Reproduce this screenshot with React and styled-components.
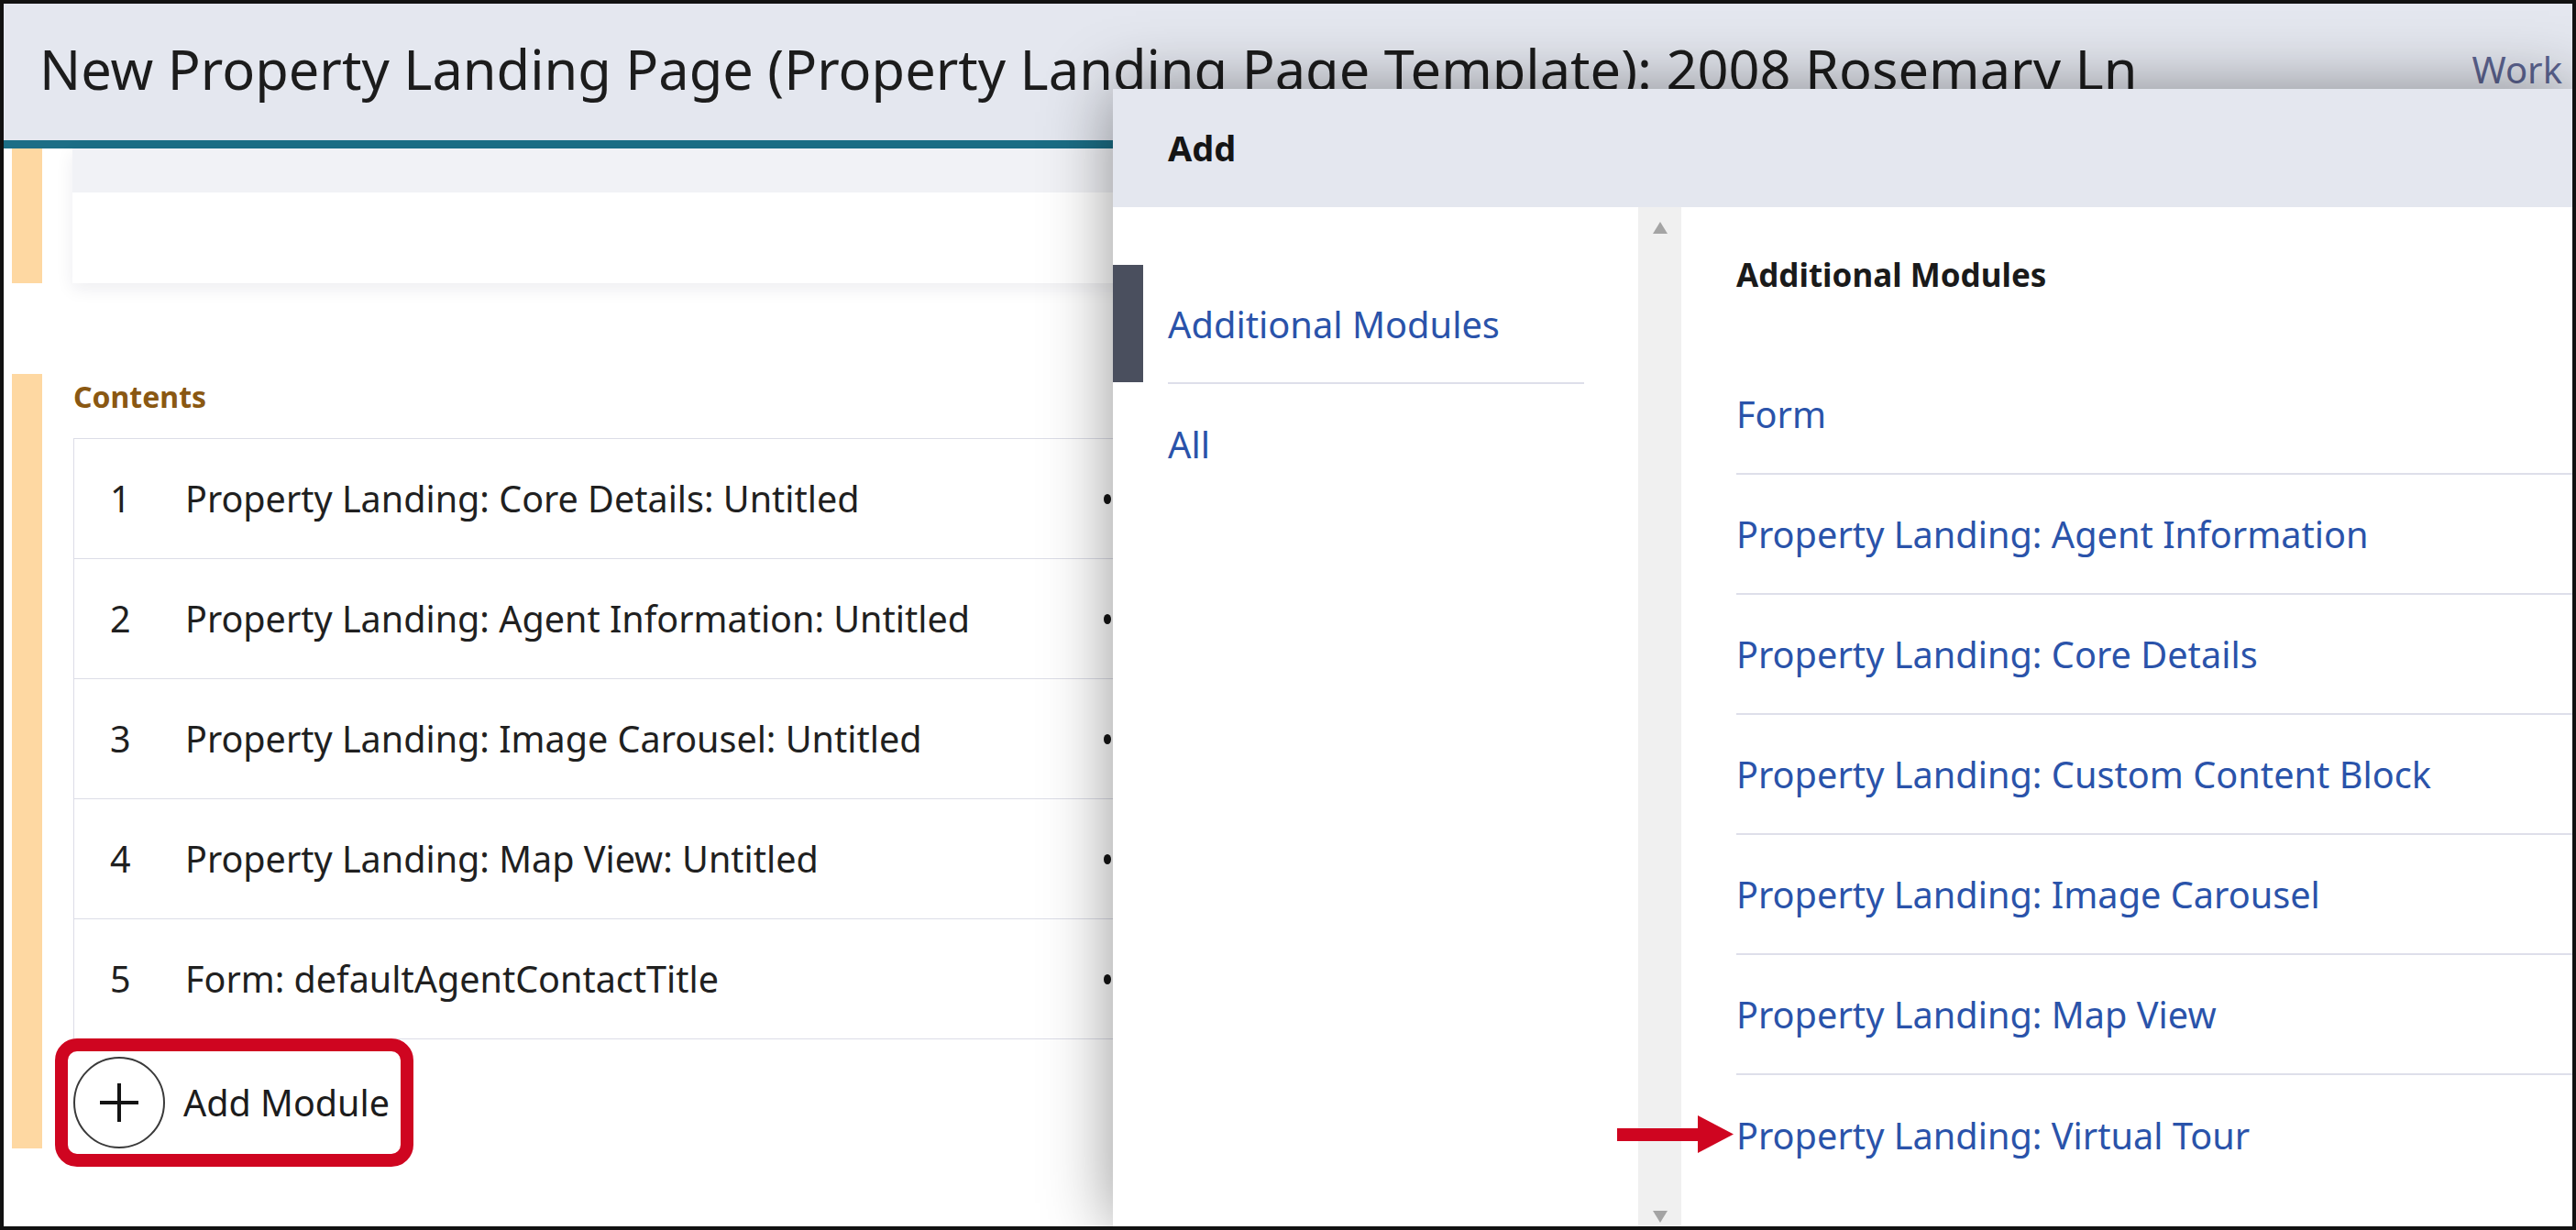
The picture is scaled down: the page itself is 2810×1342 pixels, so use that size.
import React from "react";
import styled, { createGlobalStyle } from "styled-components";

const GlobalStyle = createGlobalStyle`
  html, body { margin: 0; padding: 0; background: #ffffff; }
  body { font-family: "Noto Sans", "Open Sans", sans-serif; color: #1f1f1f; }
  * { box-sizing: border-box; }
`;

const Frame = styled.div`
  position: relative;
  width: 2810px;
  height: 1342px;
  border: 4px solid #111111;
  overflow: hidden;
  background: #ffffff;
`;

const Header = styled.header`
  height: 149px;
  background: #e4e7ef;
  display: flex;
  justify-content: space-between;
  align-items: flex-start;
  padding: 41px 11px 0 39px;
  white-space: nowrap;
`;

const Title = styled.h1`
  margin: 0;
  font-size: 59.5px;
  line-height: 60px;
  font-weight: 400;
  color: #1c1c1c;
`;

const HeaderLink = styled.span`
  margin-top: 11px;
  font-size: 40px;
  line-height: 40px;
  color: #5c6491;
`;

const AccentBar = styled.div`
  height: 9px;
  background: #1c6e86;
`;

const Main = styled.main`
  display: flex;
  flex-direction: column;
`;

const Section = styled.section`
  display: flex;
  align-items: stretch;
  margin-top: ${(p) => p.$gap || 0}px;
`;

const Stripe = styled.div`
  flex: 0 0 33px;
  margin-left: 9px;
  background: #fed8a2;
`;

const Card = styled.div`
  flex: 1;
  margin-left: 33px;
  display: flex;
  flex-direction: column;
  box-shadow: 0 6px 18px rgba(20, 30, 60, 0.08);
`;

const CardTop = styled.div`
  height: 48px;
  background: #f1f2f6;
`;

const CardBody = styled.div`
  height: 99px;
  background: #ffffff;
`;

const SectionBody = styled.div`
  flex: 1;
  margin-left: 34px;
  display: flex;
  flex-direction: column;
  align-items: flex-start;
`;

const SectionTitle = styled.h2`
  margin: 9px 0 29px;
  font-size: 32px;
  line-height: 32px;
  font-weight: 700;
  color: #8a5812;
`;

const Table = styled.div`
  align-self: stretch;
  border-top: 1px solid #dcdde7;
  border-left: 1px solid #dcdde7;
`;

const Row = styled.div`
  display: grid;
  grid-template-columns: 82px 1002px 40px;
  align-items: center;
  height: 131px;
  padding-left: 39px;
  border-bottom: 1px solid #dcdde7;
  font-size: 39.5px;
  color: #202020;
  white-space: nowrap;
`;

const RowNum = styled.span``;
const RowLabel = styled.span``;

const Dots = styled.span`
  display: flex;
  gap: 8px;
  span {
    width: 11px;
    height: 11px;
    border-radius: 50%;
    background: #151515;
  }
`;

const AddButton = styled.button`
  margin-top: 19px;
  height: 100px;
  display: flex;
  align-items: center;
  gap: 20px;
  padding: 0 6px 0 0;
  background: transparent;
  border: none;
  border-radius: 4px;
  outline: 14px solid #cf0520;
  outline-offset: 6px;
  font-family: inherit;
  font-size: 39.5px;
  color: #1c1c1c;
  cursor: pointer;
`;

const PlusCircle = styled.span`
  width: 100px;
  height: 100px;
  border-radius: 50%;
  border: 2px solid #3a3a3a;
  display: flex;
  align-items: center;
  justify-content: center;
`;

const Modal = styled.div`
  position: absolute;
  top: 93px;
  left: 1210px;
  right: 0;
  bottom: 0;
  background: #ffffff;
  display: flex;
  flex-direction: column;
  box-shadow: 0 0 70px rgba(0, 0, 0, 0.42);
`;

const ModalHeader = styled.div`
  height: 129px;
  line-height: 129px;
  padding-left: 60px;
  background: #e4e7ef;
  font-size: 38px;
  font-weight: 700;
  color: #151515;
`;

const ModalBody = styled.div`
  flex: 1;
  display: flex;
  min-height: 0;
`;

const Nav = styled.nav`
  flex: 0 0 573px;
  padding-top: 63px;
  display: flex;
  flex-direction: column;
`;

const NavItem = styled.div`
  display: flex;
  align-items: flex-start;
`;

const Indicator = styled.span`
  flex: 0 0 33px;
  height: 128px;
  margin-right: 27px;
  background: ${(p) => (p.$active ? "#4a4f5e" : "transparent")};
`;

const NavLabel = styled.span`
  flex: 1;
  height: 130px;
  margin-right: 59px;
  display: flex;
  align-items: center;
  font-size: 39.8px;
  color: #2a53aa;
  border-bottom: ${(p) => (p.$divider ? "2px solid #dedfea" : "none")};
`;

const Scrollbar = styled.div`
  flex: 0 0 47px;
  background: #f0f0f0;
  display: flex;
  flex-direction: column;
  justify-content: space-between;
  align-items: center;
  padding: 16px 0 4px;
`;

const ModuleList = styled.div`
  flex: 1;
  padding: 56px 0 0 60px;
  display: flex;
  flex-direction: column;
`;

const ListHeading = styled.h3`
  margin: 0 0 70px;
  font-size: 35px;
  line-height: 35px;
  font-weight: 700;
  color: #1a1a1a;
`;

const ModuleRow = styled.div`
  position: relative;
  height: 131px;
  display: flex;
  align-items: center;
  font-size: 39.7px;
  color: #2a53aa;
  white-space: nowrap;
  border-bottom: ${(p) => (p.$last ? "none" : "2px solid #dedfea")};
`;

const Pointer = styled.svg`
  position: absolute;
  left: -130px;
  top: 44px;
`;

const leftRows = [
  "Property Landing: Core Details: Untitled",
  "Property Landing: Agent Information: Untitled",
  "Property Landing: Image Carousel: Untitled",
  "Property Landing: Map View: Untitled",
  "Form: defaultAgentContactTitle",
];

const modules = [
  "Form",
  "Property Landing: Agent Information",
  "Property Landing: Core Details",
  "Property Landing: Custom Content Block",
  "Property Landing: Image Carousel",
  "Property Landing: Map View",
  "Property Landing: Virtual Tour",
];

const Triangle = ({ down }) => (
  <svg width="16" height="13" viewBox="0 0 16 13">
    <polygon
      points={down ? "0,0 16,0 8,13" : "8,0 16,13 0,13"}
      fill="#a4a4a4"
    />
  </svg>
);

export default function App() {
  return (
    <>
      <GlobalStyle />
      <Frame>
        <Header>
          <Title>New Property Landing Page (Property Landing Page Template): 2008 Rosemary Ln</Title>
          <HeaderLink>Work</HeaderLink>
        </Header>
        <AccentBar />
        <Main>
          <Section>
            <Stripe />
            <Card>
              <CardTop />
              <CardBody />
            </Card>
          </Section>
          <Section $gap={99}>
            <Stripe />
            <SectionBody>
              <SectionTitle>Contents</SectionTitle>
              <Table>
                {leftRows.map((label, i) => (
                  <Row key={label}>
                    <RowNum>{i + 1}</RowNum>
                    <RowLabel>{label}</RowLabel>
                    <Dots>
                      <span />
                      <span />
                      <span />
                    </Dots>
                  </Row>
                ))}
              </Table>
              <AddButton type="button">
                <PlusCircle>
                  <svg width="42" height="42" viewBox="0 0 42 42">
                    <rect x="19" y="0" width="4" height="42" fill="#141414" />
                    <rect x="0" y="19" width="42" height="4" fill="#141414" />
                  </svg>
                </PlusCircle>
                Add Module
              </AddButton>
            </SectionBody>
          </Section>
        </Main>

        <Modal>
          <ModalHeader>Add</ModalHeader>
          <ModalBody>
            <Nav>
              <NavItem>
                <Indicator $active />
                <NavLabel $divider>Additional Modules</NavLabel>
              </NavItem>
              <NavItem>
                <Indicator />
                <NavLabel>All</NavLabel>
              </NavItem>
            </Nav>
            <Scrollbar>
              <Triangle />
              <Triangle down />
            </Scrollbar>
            <ModuleList>
              <ListHeading>Additional Modules</ListHeading>
              {modules.map((m, i) => (
                <ModuleRow key={m} $last={i === modules.length - 1}>
                  {i === modules.length - 1 && (
                    <Pointer width="127" height="41" viewBox="0 0 127 41">
                      <rect x="0" y="14" width="89" height="14" fill="#cf0520" />
                      <polygon points="88,0 127,20.5 88,41" fill="#cf0520" />
                    </Pointer>
                  )}
                  {m}
                </ModuleRow>
              ))}
            </ModuleList>
          </ModalBody>
        </Modal>
      </Frame>
    </>
  );
}
